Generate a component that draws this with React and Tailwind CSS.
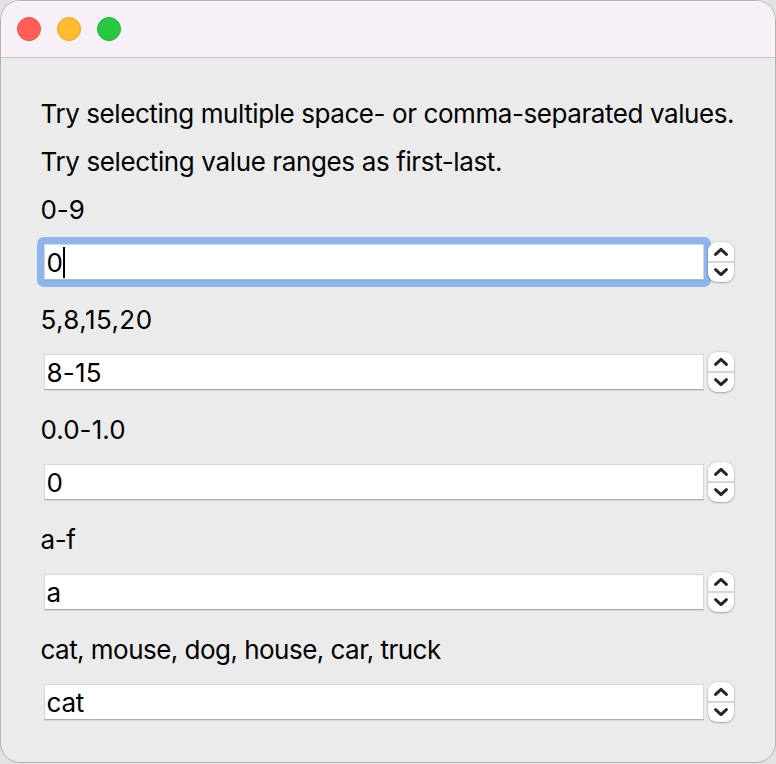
const fields = [
  { label: "0-9", value: "0", focused: true, labelTracking: "tracking-[-0.1px]", valueTracking: "" },
  { label: "5,8,15,20", value: "8-15", labelTracking: "tracking-[0.42px]", valueTracking: "tracking-[0.2px]" },
  { label: "0.0-1.0", value: "0", labelTracking: "tracking-[0.05px]", valueTracking: "" },
  { label: "a-f", value: "a", labelTracking: "tracking-[-0.4px]", valueTracking: "" },
  { label: "cat, mouse, dog, house, car, truck", value: "cat", labelTracking: "tracking-[-0.53px]", valueTracking: "tracking-[-0.2px]" },
];

function Stepper() {
  return (
    <div className="flex h-[40px] w-[26px] shrink-0 flex-col overflow-hidden rounded-[9px] bg-white shadow-[0_0_1px_1px_rgba(0,0,0,0.07),0_1px_2px_rgba(0,0,0,0.25)]">
      <svg viewBox="0 0 26 40" className="h-[40px] w-[26px]" fill="none">
        <rect x="0" y="15" width="26" height="4" fill="#fafafa" />
        <rect x="0" y="19" width="26" height="2" fill="#d6d6d6" />
        <rect x="0" y="21" width="26" height="4" fill="#fafafa" />
        <path d="M7.6 12.4 L13 7.4 L18.4 12.4" stroke="#262626" strokeWidth="3" strokeLinecap="round" strokeLinejoin="round" />
        <path d="M7.6 27.6 L13 32.6 L18.4 27.6" stroke="#262626" strokeWidth="3" strokeLinecap="round" strokeLinejoin="round" />
      </svg>
    </div>
  );
}

function Field({ label, value, focused, labelTracking, valueTracking }) {
  return (
    <div className="flex h-[110px] flex-col">
      <div className={`h-8 whitespace-nowrap leading-8 ${labelTracking}`}>{label}</div>
      <div className="mt-[15px] flex h-[42px] items-center pl-[3.5px]">
        <div className={`-m-[7px] shrink-0 rounded-[7px] p-[7px] ${focused ? "bg-[#8fb5ee]" : ""}`}>
          <div
            className={`flex h-[36px] w-[660px] items-center border border-[#d6d6d6] bg-white pl-[1.5px] ${
              focused ? "border-b-[#b4b8bc] shadow-[0_1px_0_#86a9de]" : "border-b-[#acacac] shadow-[0_1px_0_#d8d8d8]"
            }`}
          >
            <span className={`pt-[2px] leading-8 ${valueTracking}`}>{value}</span>
            {focused && <span className="mt-px h-[31px] w-[2px] bg-black" />}
          </div>
        </div>
        <div className="z-10 ml-[4px]">
          <Stepper />
        </div>
      </div>
    </div>
  );
}

export default function App() {
  return (
    <div className="h-[764px] w-[776px] overflow-hidden bg-[#e2e2e2] font-['Inter','Liberation_Sans',sans-serif] text-[26px] text-black">
      <div className="flex h-[763px] w-[776px] flex-col overflow-hidden rounded-[20px] border border-[#b2b2b2] bg-[#ebebeb]">
        <div className="flex h-[57px] shrink-0 items-center gap-4 border-b border-[#c4c0c3] bg-[#f7f0f7] pl-4 shadow-[inset_0_1px_0_#ffffff]">
          <div className="size-6 rounded-full border border-[#e9504a] bg-[#ff5f57]" />
          <div className="size-6 rounded-full border border-[#e5a526] bg-[#febc2e]" />
          <div className="size-6 rounded-full border border-[#20b435] bg-[#28c840]" />
        </div>
        <div className="flex flex-col pl-[39.5px] pt-[40px]">
          <p className="mb-4 whitespace-nowrap leading-8 tracking-[-0.42px]">
            Try selecting multiple space- or comma-separated values.
          </p>
          <p className="mb-4 whitespace-nowrap leading-8 tracking-[-0.37px]">
            Try selecting value ranges as first-last.
          </p>
          {fields.map((field) => (
            <Field key={field.label} {...field} />
          ))}
        </div>
      </div>
    </div>
  );
}
